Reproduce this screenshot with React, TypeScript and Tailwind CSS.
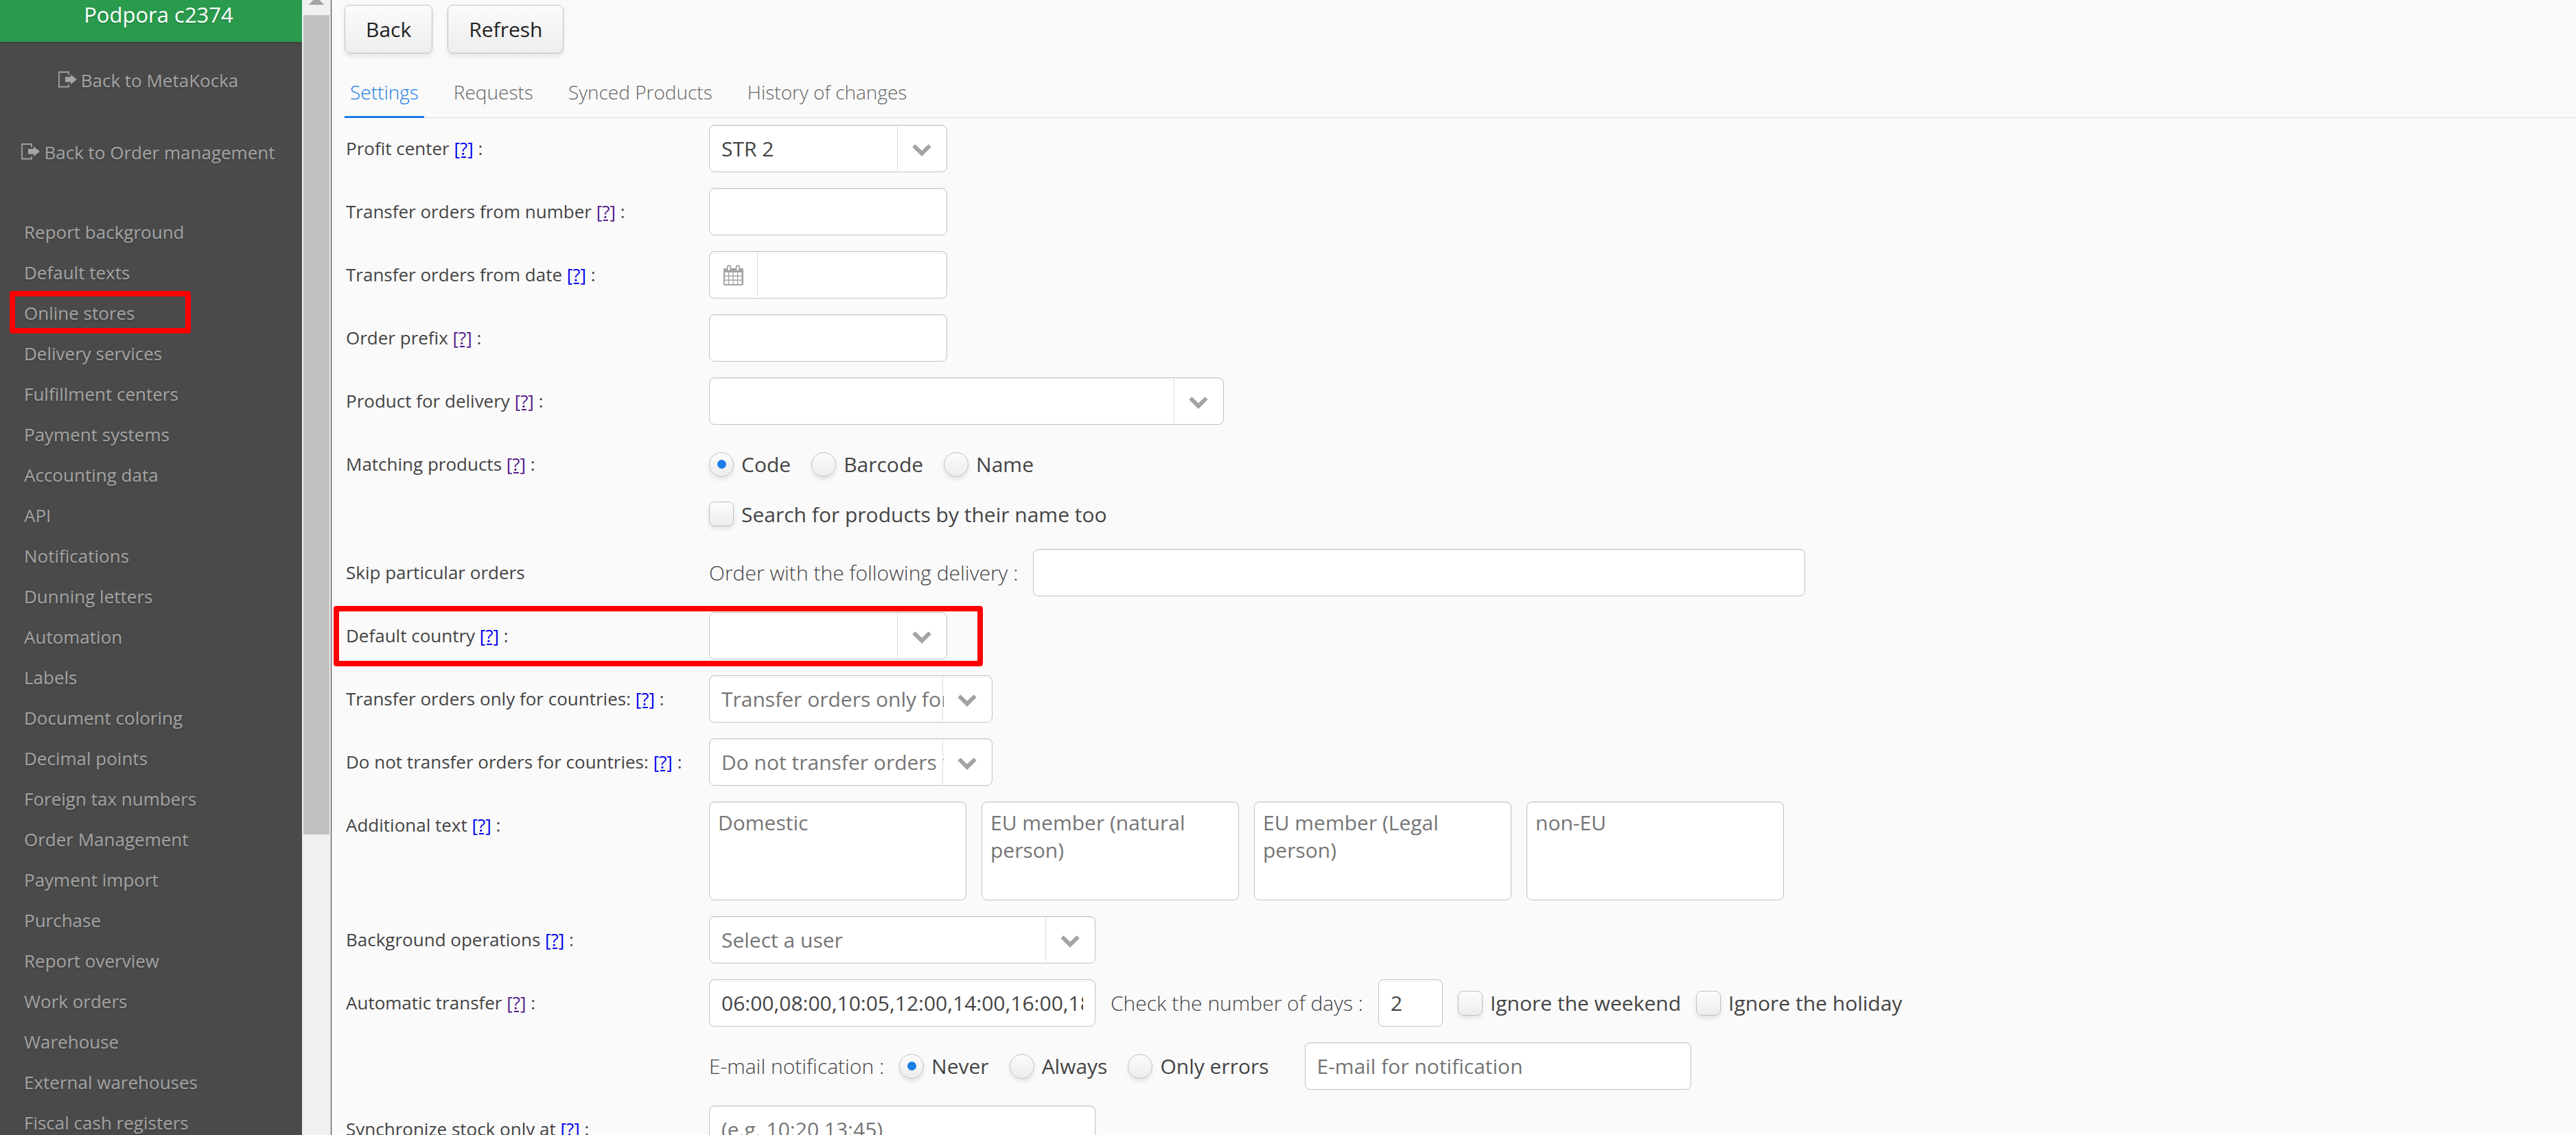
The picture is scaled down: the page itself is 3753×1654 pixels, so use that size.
import { useState, type InputHTMLAttributes, type ReactNode } from "react";
import clsx from "clsx";

const menuItems = [
  "Report background",
  "Default texts",
  "Online stores",
  "Delivery services",
  "Fulfillment centers",
  "Payment systems",
  "Accounting data",
  "API",
  "Notifications",
  "Dunning letters",
  "Automation",
  "Labels",
  "Document coloring",
  "Decimal points",
  "Foreign tax numbers",
  "Order Management",
  "Payment import",
  "Purchase",
  "Report overview",
  "Work orders",
  "Warehouse",
  "External warehouses",
  "Fiscal cash registers",
];

const tabs = ["Settings", "Requests", "Synced Products", "History of changes"];

const additionalTexts = ["Domestic", "EU member (natural person)", "EU member (Legal person)", "non-EU"];

const fieldClass =
  "border border-[#c2c2c2] rounded-lg bg-white text-[30px] text-[#444] placeholder:text-[#757575] shadow-[inset_0_2px_2px_rgba(0,0,0,0.04)] outline-none";

const raisedClass =
  "border border-[#c0c0c0] bg-linear-to-b from-[#fcfcfc] to-[#ededed] shadow-[0_4px_6px_rgba(0,0,0,0.09)]";

function ExitIcon() {
  return (
    <svg className="w-[28px] h-[27px] shrink-0" viewBox="0 0 28 27" aria-hidden="true">
      <path d="M15 5.5V1H1v21.500h14V19" fill="none" stroke="#a0a0a0" strokeWidth="1.8" />
      <path d="M10 8h8V4.500l9 7.300-9 7.200V15.500h-8z" fill="#a6a6a6" />
    </svg>
  );
}

function ChevronIcon() {
  return (
    <svg className="w-[28px] h-[23px]" viewBox="0 0 28 23" aria-hidden="true">
      <path d="M0.300 9.200 4.400 5.200 14 14.600l9.600-9.400 4.100 4L14 23z" fill="#a3a3a3" />
    </svg>
  );
}

function CalendarIcon() {
  return (
    <svg className="w-[29px] h-[30px]" viewBox="0 0 29 30" aria-hidden="true">
      <rect x="0" y="5" width="29" height="25" rx="2" fill="#a3a3a3" />
      <path
        d="M2 11h5v4.500H2zM8.300 11h5.200v4.500H8.300zM14.800 11h5.200v4.500h-5.200zM21.300 11h5.200v4.500h-5.200zM2 17h5v4.500H2zM8.300 17h5.200v4.500H8.300zM14.800 17h5.200v4.500h-5.200zM21.300 17h5.200v4.500h-5.200zM2 23h5v5H2zM8.300 23h5.200v5H8.300zM14.800 23h5.200v5h-5.200zM21.300 23h5.200v5h-5.200z"
        fill="#fff"
      />
      <rect x="5.800" y="1" width="4.500" height="8" rx="2" fill="#fff" stroke="#a3a3a3" strokeWidth="1.800" />
      <rect x="18.600" y="1" width="4.500" height="8" rx="2" fill="#fff" stroke="#a3a3a3" strokeWidth="1.800" />
    </svg>
  );
}

type RowProps = {
  label?: string;
  htmlFor?: string;
  help?: "new" | "visited";
  marked?: boolean;
  children: ReactNode;
};

function Row({ label, htmlFor, help, marked, children }: RowProps) {
  return (
    <div className="relative grid grid-cols-[531px_1fr] items-start">
      <div className="h-[69px] pl-0.5 flex items-center text-[26px] text-[#444]">
        <p>
          {label && <label htmlFor={htmlFor}>{label}</label>}
          {help && (
            <>
              {" "}
              <a href="#help" className={clsx("underline", help === "new" ? "text-[#0000ee]" : "text-[#551a8b]")}>
                [?]
              </a>{" "}
              :
            </>
          )}
        </p>
      </div>
      <div className="flex items-center gap-[22px]">{children}</div>
      {marked && (
        <span className="absolute -left-4 -top-[9px] w-[946px] h-[88px] border-8 border-[#ff0000] rounded-sm pointer-events-none" />
      )}
    </div>
  );
}

function TextField({ className, ...props }: InputHTMLAttributes<HTMLInputElement>) {
  return <input type="text" className={clsx(fieldClass, "h-[69px] px-[17px]", className)} {...props} />;
}

function SelectField({ id, value, placeholder, className }: { id: string; value?: string; placeholder?: string; className: string }) {
  return (
    <div className={clsx("relative h-[69px]", className)}>
      <select
        id={id}
        defaultValue={value ?? ""}
        className={clsx(fieldClass, "appearance-none w-full h-full pl-[17px] pr-[70px]", !value && "text-[#757575]")}
      >
        <option value="">{placeholder}</option>
        {value && <option value={value}>{value}</option>}
      </select>
      <span className="absolute right-0.5 inset-y-0.5 w-[71px] border-l border-[#ddd] flex items-center justify-center pointer-events-none">
        <ChevronIcon />
      </span>
    </div>
  );
}

function Choice({ type, name, label, defaultChecked }: { type: "radio" | "checkbox"; name: string; label: string; defaultChecked?: boolean }) {
  return (
    <label className="flex items-center gap-[11px] text-[30px] text-[#444] whitespace-nowrap">
      <input
        type={type}
        name={name}
        defaultChecked={defaultChecked}
        className={clsx(
          raisedClass,
          "appearance-none size-9 shrink-0 grid place-content-center checked:before:content-[''] checked:before:size-[13px] checked:before:rounded-full checked:before:bg-[#1a7de5]",
          type === "radio" ? "rounded-full" : "rounded-lg",
        )}
      />
      {label}
    </label>
  );
}

function Sidebar() {
  return (
    <aside className="w-[440px] shrink-0 bg-[#4a4a4a] text-[26px] text-[#a3a3a3] [text-shadow:0_2px_2px_rgba(0,0,0,0.15)]">
      <h1 className="bg-[#2a9b4d] text-white text-[31px] leading-[43px] pb-[18px] pl-[22px] text-center shadow-[0_2px_4px_rgba(0,0,0,0.2)]">
        Podpora c2374
      </h1>
      <nav className="mt-[27px]">
        <div className="flex flex-col items-center gap-[46px] pr-2">
          <a href="#metakocka" className="h-[59px] flex items-center gap-[5px]">
            <ExitIcon />
            Back to MetaKocka
          </a>
          <a href="#orders" className="h-[59px] flex items-center gap-[5px]">
            <ExitIcon />
            Back to Order management
          </a>
        </div>
        <ul className="mt-[57px]">
          {menuItems.map((item) => (
            <li key={item} className="relative">
              <a href="#menu" className="block pl-[35px] leading-[59px]">
                {item}
              </a>
              {item === "Online stores" && (
                <span className="absolute left-3.5 -top-[3px] w-[264px] h-[62px] border-8 border-[#ff0000] rounded-sm pointer-events-none" />
              )}
            </li>
          ))}
        </ul>
      </nav>
    </aside>
  );
}

function ScrollTrack() {
  return (
    <div className="w-[43px] shrink-0 bg-[#f0f0f0] border-r border-[#333] px-0.5 flex flex-col items-center">
      <svg className="w-[22px] h-[22px] shrink-0" viewBox="0 0 22 22" aria-hidden="true">
        <path d="M0 7 11-5 22 7z" fill="#a3a3a3" />
      </svg>
      <div className="w-full h-[72.2%] bg-[#c1c1c1]" />
    </div>
  );
}

export default function App() {
  const [activeTab, setActiveTab] = useState("Settings");

  return (
    <div className="flex h-screen overflow-hidden bg-[#fafafa] font-['Open_Sans','Noto_Sans',sans-serif]">
      <Sidebar />
      <ScrollTrack />
      <main className="flex-1 min-w-0 pl-[19px] pt-[7px]">
        <div className="flex gap-[22px]">
          <button className={clsx(raisedClass, "h-[71px] px-[30px] rounded-lg text-[30px] text-[#222]")}>Back</button>
          <button className={clsx(raisedClass, "h-[71px] px-[30px] rounded-lg text-[30px] text-[#222]")}>Refresh</button>
        </div>

        <div role="tablist" className="mt-[21px] flex gap-[35px] shadow-[inset_0_-1px_0_#ddd]">
          {tabs.map((tab) => (
            <button
              key={tab}
              role="tab"
              aria-selected={tab === activeTab}
              onClick={() => setActiveTab(tab)}
              className={clsx(
                "h-[73px] px-2 text-[28px] font-light border-b-3",
                tab === activeTab ? "text-[#1a7de5] border-[#1a7de5]" : "text-[#666] border-transparent",
              )}
            >
              {tab}
            </button>
          ))}
        </div>

        <form className="mt-2.5 flex flex-col gap-[23px]">
          <Row label="Profit center" htmlFor="profit-center" help="new">
            <SelectField id="profit-center" value="STR 2" className="w-[347px]" />
          </Row>
          <Row label="Transfer orders from number" htmlFor="from-number" help="visited">
            <TextField id="from-number" className="w-[347px]" />
          </Row>
          <Row label="Transfer orders from date" htmlFor="from-date" help="new">
            <div className={clsx(fieldClass, "w-[347px] h-[69px] flex")}>
              <span className="w-[70px] my-0.5 border-r border-[#ddd] flex items-center justify-center">
                <CalendarIcon />
              </span>
              <input id="from-date" type="text" className="flex-1 min-w-0 px-4 outline-none" />
            </div>
          </Row>
          <Row label="Order prefix" htmlFor="order-prefix" help="visited">
            <TextField id="order-prefix" className="w-[347px]" />
          </Row>
          <Row label="Product for delivery" htmlFor="delivery-product" help="visited">
            <SelectField id="delivery-product" className="w-[750px]" />
          </Row>
          <Row label="Matching products" help="visited">
            <div className="pb-2.5">
              <div className="h-[69px] flex items-center gap-[30px]">
                <Choice type="radio" name="matching" label="Code" defaultChecked />
                <Choice type="radio" name="matching" label="Barcode" />
                <Choice type="radio" name="matching" label="Name" />
              </div>
              <div className="mt-5 h-9 flex items-center">
                <Choice type="checkbox" name="search-by-name" label="Search for products by their name too" />
              </div>
            </div>
          </Row>
          <Row label="Skip particular orders">
            <label htmlFor="skip-delivery" className="text-[30px] font-light text-[#444]">
              Order with the following delivery :
            </label>
            <TextField id="skip-delivery" className="w-[1125px]" />
          </Row>
          <Row label="Default country" htmlFor="default-country" help="new" marked>
            <SelectField id="default-country" className="w-[347px]" />
          </Row>
          <Row label="Transfer orders only for countries:" htmlFor="only-countries" help="new">
            <SelectField id="only-countries" placeholder="Transfer orders only for countries" className="w-[413px]" />
          </Row>
          <Row label="Do not transfer orders for countries:" htmlFor="except-countries" help="new">
            <SelectField id="except-countries" placeholder="Do not transfer orders for countries" className="w-[413px]" />
          </Row>
          <Row label="Additional text" help="new">
            {additionalTexts.map((text) => (
              <textarea
                key={text}
                aria-label={text}
                placeholder={text}
                className={clsx(fieldClass, "w-[375px] h-[144px] px-3 py-2.5 leading-10 resize-none")}
              />
            ))}
          </Row>
          <Row label="Background operations" htmlFor="background-user" help="new">
            <SelectField id="background-user" placeholder="Select a user" className="w-[563px]" />
          </Row>
          <Row label="Automatic transfer" htmlFor="auto-transfer" help="visited">
            <TextField
              id="auto-transfer"
              className="w-[563px]"
              defaultValue="06:00,08:00,10:05,12:00,14:00,16:00,18:00,20:00"
            />
            <label htmlFor="check-days" className="text-[30px] font-light text-[#444]">
              Check the number of days :
            </label>
            <TextField id="check-days" className="w-[94px]" defaultValue="2" />
            <Choice type="checkbox" name="ignore-weekend" label="Ignore the weekend" />
            <Choice type="checkbox" name="ignore-holiday" label="Ignore the holiday" />
          </Row>
          <Row>
            <span className="text-[30px] font-light text-[#444]">E-mail notification :</span>
            <div className="flex items-center gap-[30px] pr-[30px]">
              <Choice type="radio" name="notification" label="Never" defaultChecked />
              <Choice type="radio" name="notification" label="Always" />
              <Choice type="radio" name="notification" label="Only errors" />
            </div>
            <TextField aria-label="E-mail for notification" placeholder="E-mail for notification" className="w-[563px]" />
          </Row>
          <Row label="Synchronize stock only at" htmlFor="sync-stock" help="new">
            <TextField id="sync-stock" placeholder="(e.g. 10:20,13:45)" className="w-[563px]" />
          </Row>
        </form>
      </main>
    </div>
  );
}
